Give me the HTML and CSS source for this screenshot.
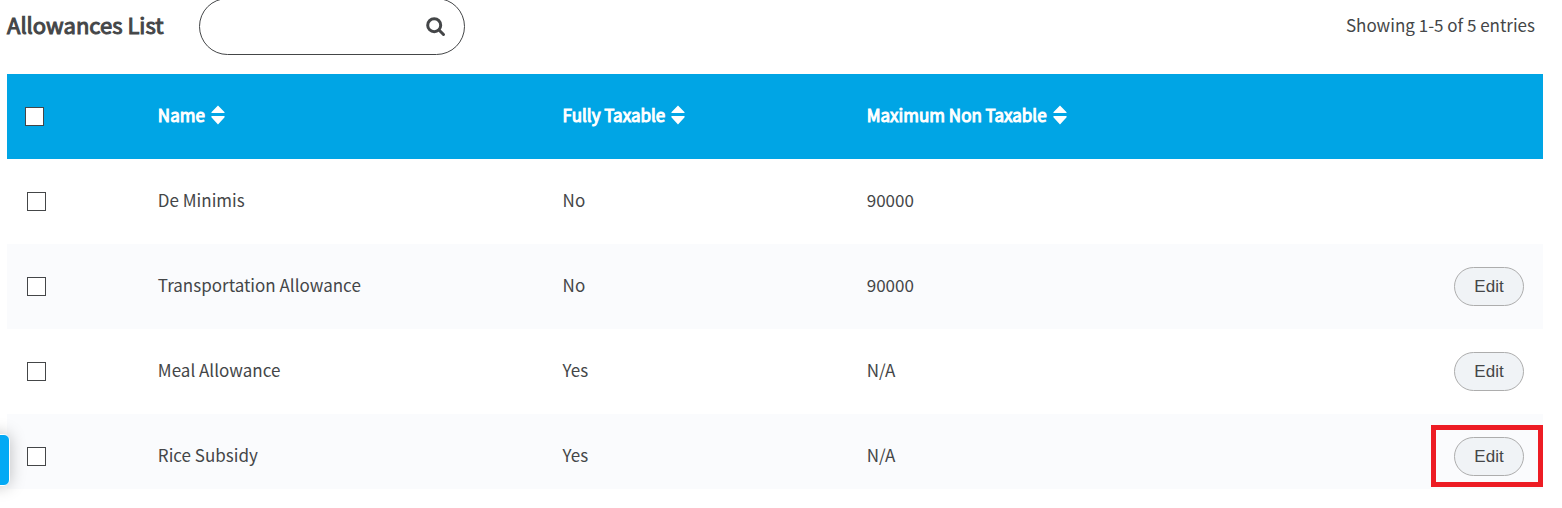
FILE: index.html
```html
<!DOCTYPE html>
<html lang="en">
<head>
<meta charset="utf-8">
<meta name="viewport" content="width=device-width, initial-scale=1">
<title>Allowances List</title>
<link rel="stylesheet" href="styles.css">
</head>
<body>
<svg class="sprite" aria-hidden="true">
  <symbol id="sort" viewBox="0 0 14 20">
    <path d="M7 0.5 13.6 7.2Q14 8 13 8H1Q0 8 .4 7.2ZM7 19.5 13.6 12.3Q14 11 13 11H1Q0 11 .4 12.3Z"/>
  </symbol>
</svg>
<main class="page">
  <header class="toolbar">
    <h1 class="title">Allowances List</h1>
    <form class="search" role="search">
      <input class="search-input" type="search" aria-label="Search allowances">
      <button class="search-button" type="button" aria-label="Search">
        <svg class="search-icon" viewBox="0 0 20 20" aria-hidden="true"><circle cx="8.2" cy="8.2" r="6.5"/><path d="M13 13 17.5 17.5"/></svg>
      </button>
    </form>
    <p class="summary">Showing 1-5 of 5 entries</p>
  </header>
  <table class="list">
    <colgroup><col class="col-check"><col class="col-name"><col class="col-tax"><col class="col-max"><col class="col-action"></colgroup>
    <thead>
      <tr>
        <th><input class="check" type="checkbox" aria-label="Select all"></th>
        <th scope="col"><button class="sort" type="button"><span class="sort-label">Name</span><svg class="sort-icon" aria-hidden="true"><use href="#sort"/></svg></button></th>
        <th scope="col"><button class="sort" type="button"><span class="sort-label">Fully Taxable</span><svg class="sort-icon" aria-hidden="true"><use href="#sort"/></svg></button></th>
        <th scope="col"><button class="sort" type="button"><span class="sort-label">Maximum Non Taxable</span><svg class="sort-icon" aria-hidden="true"><use href="#sort"/></svg></button></th>
        <td></td>
      </tr>
    </thead>
    <tbody>
      <tr>
        <td><input class="check" type="checkbox" aria-label="Select De Minimis"></td>
        <td class="text">De Minimis</td><td class="text">No</td><td class="text">90000</td><td></td>
      </tr>
      <tr>
        <td><input class="check" type="checkbox" aria-label="Select Transportation Allowance"></td>
        <td class="text">Transportation Allowance</td><td class="text">No</td><td class="text">90000</td>
        <td class="action"><button class="edit" type="button">Edit</button></td>
      </tr>
      <tr>
        <td><input class="check" type="checkbox" aria-label="Select Meal Allowance"></td>
        <td class="text">Meal Allowance</td><td class="text">Yes</td><td class="text">N/A</td>
        <td class="action"><button class="edit" type="button">Edit</button></td>
      </tr>
      <tr class="last">
        <td><input class="check" type="checkbox" aria-label="Select Rice Subsidy"></td>
        <td class="text">Rice Subsidy</td><td class="text">Yes</td><td class="text">N/A</td>
        <td class="action"><button class="edit" type="button">Edit</button><span class="highlight"></span></td>
      </tr>
    </tbody>
  </table>
  <button class="side-tab" type="button" aria-label="Open panel"></button>
</main>
</body>
</html>
```
FILE: styles.css
```css
* {
  box-sizing: border-box;
}

body {
  margin: 0;
  background: #fff;
  color: #444648;
  font-family: "Noto Sans CJK JP", "Noto Sans", sans-serif;
  font-size: 17px;
  line-height: 24px;
}

button {
  font: inherit;
  color: inherit;
  cursor: pointer;
}

.sprite {
  display: none;
}

.page {
  position: relative;
  padding: 0 19px 19px 7px;
  overflow: hidden;
}

.toolbar {
  display: flex;
  align-items: center;
  height: 57px;
  margin: -2px 8px 19px 0;
}

.title {
  width: 192px;
  margin: 0;
  padding-bottom: 5px;
  font-size: 22px;
  font-weight: 400;
  line-height: 32px;
  white-space: nowrap;
  -webkit-text-stroke: 1px currentColor;
}

.search {
  display: flex;
  align-items: center;
  width: 266px;
  height: 57px;
  padding: 0 18px 0 24px;
  border: 1px solid #444648;
  border-radius: 29px;
}

.search-input {
  flex: 1;
  min-width: 0;
  border: 0;
  outline: 0;
  background: transparent;
  font: inherit;
}

.search-button {
  display: flex;
  padding: 0;
  border: 0;
  background: transparent;
}

.search-icon {
  width: 20px;
  height: 20px;
  fill: none;
  stroke: #444648;
  stroke-width: 3;
  stroke-linecap: round;
}

.summary {
  margin: 0 0 0 auto;
  padding-bottom: 3px;
}

.list {
  width: 100%;
  border-collapse: collapse;
  table-layout: fixed;
}

.col-check {
  width: 8.65%;
}

.col-name {
  width: 26.35%;
}

.col-tax {
  width: 19.8%;
}

.col-max {
  width: 30%;
}

th,
td {
  height: 85px;
  padding: 0 18px;
  font-weight: 400;
  text-align: left;
  vertical-align: middle;
}

thead {
  background: #00a5e5;
  color: #fff;
}

tbody tr:nth-child(even) {
  background: #fafbfd;
}

.text {
  padding-bottom: 3px;
}

.last td {
  height: 75px;
  padding-top: 10px;
}

.check {
  display: block;
  width: 19px;
  height: 19px;
  margin: 0 0 0 2px;
  appearance: none;
  border: 1px solid #444648;
  background: #fff;
}

thead .check {
  margin-left: 0;
}

.sort {
  display: flex;
  align-items: center;
  gap: 6px;
  padding: 0 0 3px;
  border: 0;
  background: transparent;
}

.sort-label {
  -webkit-text-stroke: 1px currentColor;
}

.sort-icon {
  width: 14px;
  height: 20px;
  fill: #fff;
}

.action {
  position: relative;
  padding-right: 19px;
  text-align: right;
}

.edit {
  width: 70px;
  height: 39px;
  padding: 0;
  border: 1px solid #adadad;
  border-radius: 20px;
  background: #f0f3f6;
  font-family: "Liberation Sans", Arial, sans-serif;
  vertical-align: middle;
}

.highlight {
  position: absolute;
  top: 11px;
  right: 0;
  width: 112px;
  height: 62px;
  border: 5px solid #ed1c24;
  pointer-events: none;
}

.side-tab {
  position: absolute;
  top: 434px;
  left: -30px;
  width: 40px;
  height: 52px;
  border: 1px solid #fff;
  border-radius: 6px;
  background: #03a9f4;
  box-shadow: 0 0 16px rgba(0, 0, 0, 0.25);
}
```
